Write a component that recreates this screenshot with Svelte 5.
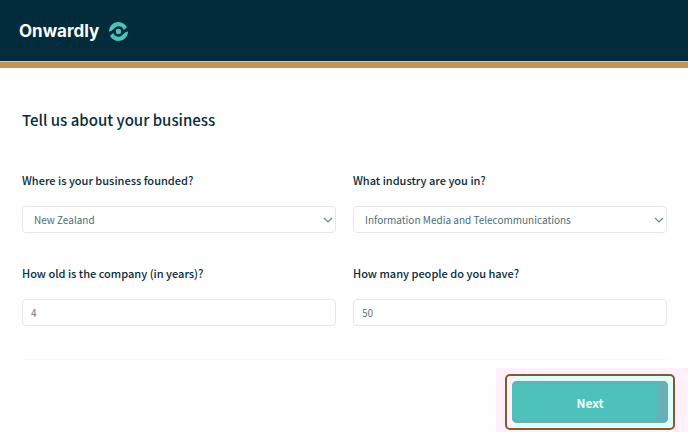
<script lang="ts">
	let country = $state('New Zealand');
	let industry = $state('Information Media and Telecommunications');
	let age = $state('4');
	let people = $state('50');
</script>

{#snippet chevron()}
	<svg class="chevron" viewBox="0 0 10 6" aria-hidden="true">
		<path d="M1 1l4 4 4-4" />
	</svg>
{/snippet}

<header class="header">
	<a class="brand" href="/">
		<span class="brand-name">Onwardly</span>
		<svg class="brand-mark" viewBox="0 0 36 36" aria-hidden="true">
			<path d="M0 18C0 8 8 0 18 0c7 0 13 4 16 10l-6 5C26 10 22 8 18 8c-8 0-10 10-18 10z" />
			<path d="M36 18c0 10-8 18-18 18-7 0-13-4-16-10l6-5c2 5 6 7 10 7 8 0 10-10 18-10z" />
			<circle cx="18" cy="18" r="5" />
		</svg>
	</a>
</header>

<main class="page">
	<h1 class="title">Tell us about your business</h1>

	<form>
		<div class="fields">
			<div class="field">
				<label for="country">Where is your business founded?</label>
				<div class="select">
					<select id="country" bind:value={country}>
						<option>New Zealand</option>
					</select>
					{@render chevron()}
				</div>
			</div>
			<div class="field">
				<label for="industry">What industry are you in?</label>
				<div class="select">
					<select id="industry" bind:value={industry}>
						<option>Information Media and Telecommunications</option>
					</select>
					{@render chevron()}
				</div>
			</div>
			<div class="field">
				<label for="age">How old is the company (in years)?</label>
				<input id="age" type="text" inputmode="numeric" bind:value={age} />
			</div>
			<div class="field">
				<label for="people">How many people do you have?</label>
				<input id="people" type="text" inputmode="numeric" bind:value={people} />
			</div>
		</div>

		<hr />

		<div class="actions">
			<div class="highlight">
				<div class="ring">
					<button type="button">Next</button>
				</div>
			</div>
		</div>
	</form>
</main>

<style>
	:global(body) {
		background: #fefefe;
		color: #082c3a;
		font-family: 'Noto Sans CJK JP', 'Open Sans', sans-serif;
	}
	.header {
		display: flex;
		align-items: center;
		height: 62px;
		padding: 0 19px;
		background: #022b3b;
		border-bottom: 6px solid #c29359;
		box-shadow: inset 0 -1px #d9c7a9;
	}
	.brand {
		display: flex;
		align-items: center;
		gap: 10px;
		color: #fff;
		text-decoration: none;
	}
	.brand-name {
		font-family: Inter, sans-serif;
		font-size: 17px;
		font-weight: 700;
		line-height: 24px;
	}
	.brand-mark {
		width: 19px;
		height: 19px;
		fill: #4dc2b9;
	}
	.page {
		padding: 39px 21px 0 22px;
	}
	.title {
		margin: 0 0 37px;
		font-size: 15px;
		font-weight: 500;
		line-height: 26px;
	}
	.fields {
		display: grid;
		grid-template-columns: 1fr 1fr;
		gap: 30px 17px;
	}
	.field {
		display: flex;
		flex-direction: column;
		gap: 16px;
		min-width: 0;
	}
	label {
		font-size: 11px;
		font-weight: 500;
		line-height: 20px;
	}
	.select {
		position: relative;
	}
	select,
	input {
		appearance: none;
		display: block;
		box-sizing: border-box;
		width: 100%;
		height: 27px;
		margin: 0;
		padding: 0 8px;
		border: 1px solid #e4e8eb;
		border-radius: 4px;
		background: #fff;
		color: #68727d;
		font: inherit;
		font-size: 10px;
	}
	select {
		padding: 0 24px 0 11px;
		color: #4c6c78;
	}
	.chevron {
		position: absolute;
		top: 11px;
		right: 3px;
		width: 10px;
		height: 6px;
		fill: none;
		stroke: #6f8790;
		stroke-width: 1.2;
		pointer-events: none;
	}
	hr {
		margin: 33px 0 0;
		border: 0;
		border-top: 1px solid #f8f8f9;
	}
	.actions {
		display: flex;
		justify-content: flex-end;
		margin: 8px -21px 0 0;
	}
	.highlight {
		padding: 6px 13px 2px 9px;
		background: #fff0fc;
	}
	.ring {
		padding: 5px;
		border: 2px solid #85592f;
		border-radius: 5px;
		background: linear-gradient(#e0fffb, #e0fffb) right / calc(100% - 6px) 100% no-repeat #fff0fc;
	}
	button {
		display: block;
		width: 156px;
		height: 42px;
		padding: 0;
		border: 0;
		border-radius: 5px;
		background: #4dc1ba;
		box-shadow:
			inset -11px 0 #68b0b8,
			inset 0 3px #68b0b8,
			inset 0 -3px #68b0b8;
		color: #f2fffd;
		font: inherit;
		font-size: 12px;
		font-weight: 700;
	}
</style>
